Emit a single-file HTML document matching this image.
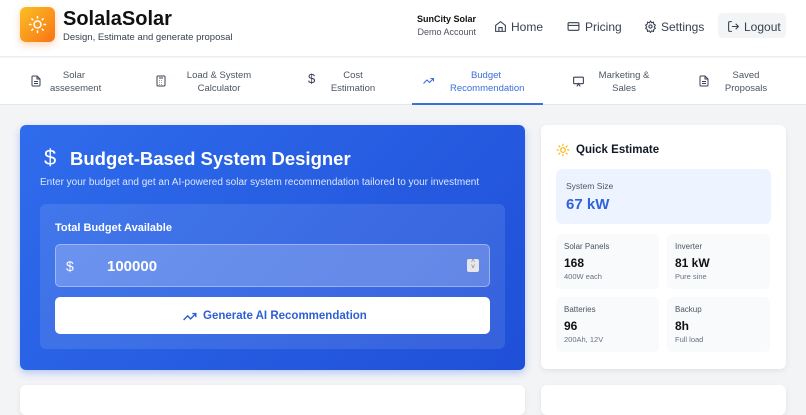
<!DOCTYPE html>
<html><head><meta charset="utf-8"><style>
*{box-sizing:border-box;margin:0;padding:0}
body{width:806px;height:400px;overflow:hidden;background:#f3f4f6;font-family:"Liberation Sans",sans-serif;color:#111827;position:relative}
.a{position:absolute}
.hdr{left:0;top:0;width:806px;height:57px;background:#fff;border-bottom:1px solid #eceef1}
.tabs{left:0;top:58px;width:806px;height:47px;background:#fff;border-bottom:1px solid #e5e7eb}
.tab{position:absolute;top:0;height:47px;font-size:9.5px;color:#4b5563;text-align:center;line-height:12.5px}
.tab .t{position:absolute;top:12px}
.tab svg{position:absolute;top:17px}
.nav{font-size:12px;color:#374151;top:20px}
.card{background:#fff;border-radius:6px;box-shadow:0 2px 6px rgba(0,0,0,.07)}
.box{background:#f8fafc;border-radius:5px;width:103px;height:55px}
.box .l{position:absolute;left:8px;top:8px;font-size:8px;color:#4b5563}
.box .v{position:absolute;left:8px;top:22px;font-size:12px;font-weight:bold;color:#111}
.box .s{position:absolute;left:8px;top:38px;font-size:7.5px;color:#6b7280}
</style></head><body>
<div class="a hdr"></div>
<div class="a" style="left:20px;top:7px;width:35px;height:35px;border-radius:6px;background:linear-gradient(135deg,#fbbf24,#f97316);box-shadow:0 3px 8px rgba(249,115,22,.3)">
<svg width="35" height="35" viewBox="0 0 35 35" fill="none" stroke="#fff" stroke-width="1.5" stroke-linecap="round"><circle cx="17.5" cy="17.5" r="3.5"/><path d="M17.5 9.5v1.5M17.5 24v1.5M9.5 17.5h1.5M24 17.5h1.5M11.8 11.8l1 1M22.2 22.2l1 1M11.8 23.2l1-1M22.2 12.8l1-1"/></svg></div>
<div class="a" style="left:63px;top:8px;font-size:20px;font-weight:bold;color:#111">SolalaSolar</div>
<div class="a" style="left:63px;top:32px;font-size:9.5px;color:#374151">Design, Estimate and generate proposal</div>
<div class="a" style="left:410px;top:14px;width:66px;text-align:right;font-size:9px;font-weight:bold;color:#111">SunCity Solar</div>
<div class="a" style="left:406px;top:27px;width:70px;text-align:right;font-size:9px;color:#4b5563">Demo Account</div>
<svg class="a" style="left:494px;top:20px" width="13" height="13" viewBox="0 0 24 24" fill="none" stroke="#374151" stroke-width="2"><path d="M3 10l9-7 9 7v11H3z"/><path d="M9 21v-7h6v7"/></svg>
<div class="a nav" style="left:511px">Home</div>
<svg class="a" style="left:567px;top:20px" width="13" height="13" viewBox="0 0 24 24" fill="none" stroke="#374151" stroke-width="2"><rect x="2" y="5" width="20" height="14" rx="2"/><path d="M2 10h20"/></svg>
<div class="a nav" style="left:585px">Pricing</div>
<svg class="a" style="left:644px;top:20px" width="13" height="13" viewBox="0 0 24 24" fill="none" stroke="#374151" stroke-width="2"><circle cx="12" cy="12" r="3"/><path d="M12 2l2 3 3.5-1 .5 3.5 3 2-2 3 2 3-3 2-.5 3.5-3.5-1-2 3-2-3-3.5 1-.5-3.5-3-2 2-3-2-3 3-2 .5-3.5 3.5 1z"/></svg>
<div class="a nav" style="left:661px">Settings</div>
<div class="a" style="left:718px;top:13px;width:68px;height:25px;background:#f3f4f6;border-radius:5px"></div>
<svg class="a" style="left:727px;top:20px" width="13" height="13" viewBox="0 0 24 24" fill="none" stroke="#374151" stroke-width="2"><path d="M9 21H5a2 2 0 01-2-2V5a2 2 0 012-2h4M16 17l5-5-5-5M21 12H9"/></svg>
<div class="a nav" style="left:744px">Logout</div>

<div class="a tabs">
<div class="tab" style="left:0;width:131px"><svg style="left:30px" width="12" height="12" viewBox="0 0 24 24" fill="none" stroke="#374151" stroke-width="2"><path d="M14 2H6a2 2 0 00-2 2v16a2 2 0 002 2h12a2 2 0 002-2V8z"/><path d="M14 2v6h6M8 13h8M8 17h8"/></svg><div class="t" style="left:50px;width:48px">Solar<br>assesement</div></div>
<div class="tab" style="left:131px;width:131px"><svg style="left:24px" width="12" height="12" viewBox="0 0 24 24" fill="none" stroke="#374151" stroke-width="2"><rect x="4" y="2" width="16" height="20" rx="2"/><path d="M8 6h8M8 11h1M12 11h1M16 11h0M8 15h1M12 15h1M8 19h1M12 19h1"/></svg><div class="t" style="left:55px;width:66px">Load &amp; System<br>Calculator</div></div>
<div class="tab" style="left:262px;width:150px"><div class="a" style="left:46px;top:15px;font-size:13px;color:#374151">$</div><div class="t" style="left:65px;width:52px">Cost<br>Estimation</div></div>
<div class="tab" style="left:412px;width:131px;color:#3b6fd9;border-bottom:2px solid #3b6fd9"><svg style="left:10px" width="13" height="12" viewBox="0 0 24 24" fill="none" stroke="#3b6fd9" stroke-width="2.2"><path d="M2 17l7-7 5 5 8-8M16 7h6v6"/></svg><div class="t" style="left:38px;width:72px">Budget<br>Recommendation</div></div>
<div class="tab" style="left:543px;width:131px"><svg style="left:29px" width="13" height="13" viewBox="0 0 24 24" fill="none" stroke="#374151" stroke-width="2"><rect x="3" y="4" width="18" height="12" rx="1"/><path d="M9 21l3-5 3 5"/></svg><div class="t" style="left:50px;width:62px">Marketing &amp;<br>Sales</div></div>
<div class="tab" style="left:674px;width:132px"><svg style="left:24px" width="12" height="12" viewBox="0 0 24 24" fill="none" stroke="#374151" stroke-width="2"><path d="M14 2H6a2 2 0 00-2 2v16a2 2 0 002 2h12a2 2 0 002-2V8z"/><path d="M14 2v6h6M8 13h8M8 17h8"/></svg><div class="t" style="left:46px;width:52px">Saved<br>Proposals</div></div>
</div>

<div class="a" style="left:20px;top:125px;width:505px;height:245px;border-radius:6px;background:linear-gradient(135deg,#2f6cec,#1f4fd8);box-shadow:0 3px 8px rgba(37,99,235,.3)"></div>
<div class="a" style="left:44px;top:145px;font-size:22px;color:#fff">$</div>
<div class="a" style="left:70px;top:148px;font-size:18.5px;font-weight:bold;color:#fff">Budget-Based System Designer</div>
<div class="a" style="left:40px;top:177px;font-size:10px;color:#dbe6ff">Enter your budget and get an AI-powered solar system recommendation tailored to your investment</div>
<div class="a" style="left:40px;top:204px;width:465px;height:145px;border-radius:6px;background:rgba(255,255,255,.1)"></div>
<div class="a" style="left:55px;top:222px;font-size:11px;font-weight:bold;color:#fff">Total Budget Available</div>
<div class="a" style="left:55px;top:244px;width:435px;height:43px;border-radius:5px;background:rgba(255,255,255,.22);border:1px solid rgba(255,255,255,.35)"></div>
<div class="a" style="left:66px;top:258px;font-size:14px;color:#fff">$</div>
<div class="a" style="left:107px;top:258px;font-size:15px;font-weight:bold;color:#fff">100000</div>
<div class="a" style="left:467px;top:259px;width:12px;height:13px;background:#e5e7eb;border-radius:2px;font-size:7px;color:#777;text-align:center;line-height:6px">˄<br>˅</div>
<div class="a" style="left:55px;top:297px;width:435px;height:37px;border-radius:5px;background:#fff"></div>
<svg class="a" style="left:183px;top:311px" width="14" height="11" viewBox="0 0 24 18" fill="none" stroke="#2f5fd6" stroke-width="2.4"><path d="M1 15l7-7 5 5 9-9M16 4h6v6"/></svg>
<div class="a" style="left:203px;top:310px;font-size:11.5px;font-weight:bold;color:#2f5fd6">Generate AI Recommendation</div>

<div class="a card" style="left:541px;top:125px;width:245px;height:244px"></div>
<svg class="a" style="left:556px;top:143px" width="14" height="14" viewBox="0 0 24 24" fill="none" stroke="#f5b301" stroke-width="2" stroke-linecap="round"><circle cx="12" cy="12" r="4"/><path d="M12 2v2M12 20v2M2 12h2M20 12h2M5 5l1.5 1.5M17.5 17.5L19 19M5 19l1.5-1.5M17.5 6.5L19 5"/></svg>
<div class="a" style="left:576px;top:144px;font-size:11.5px;font-weight:bold;color:#111827">Quick Estimate</div>
<div class="a" style="left:556px;top:169px;width:215px;height:55px;background:#eef4ff;border-radius:6px"></div>
<div class="a" style="left:566px;top:181px;font-size:8.5px;color:#4b5563">System Size</div>
<div class="a" style="left:566px;top:196px;font-size:15px;font-weight:bold;color:#2f63d9">67 kW</div>
<div class="a box" style="left:556px;top:234px"><div class="l">Solar Panels</div><div class="v">168</div><div class="s">400W each</div></div>
<div class="a box" style="left:667px;top:234px"><div class="l">Inverter</div><div class="v">81 kW</div><div class="s">Pure sine</div></div>
<div class="a box" style="left:556px;top:297px"><div class="l">Batteries</div><div class="v">96</div><div class="s">200Ah, 12V</div></div>
<div class="a box" style="left:667px;top:297px"><div class="l">Backup</div><div class="v">8h</div><div class="s">Full load</div></div>

<div class="a card" style="left:20px;top:385px;width:505px;height:30px"></div>
<div class="a card" style="left:541px;top:385px;width:245px;height:30px"></div>
</body></html>
